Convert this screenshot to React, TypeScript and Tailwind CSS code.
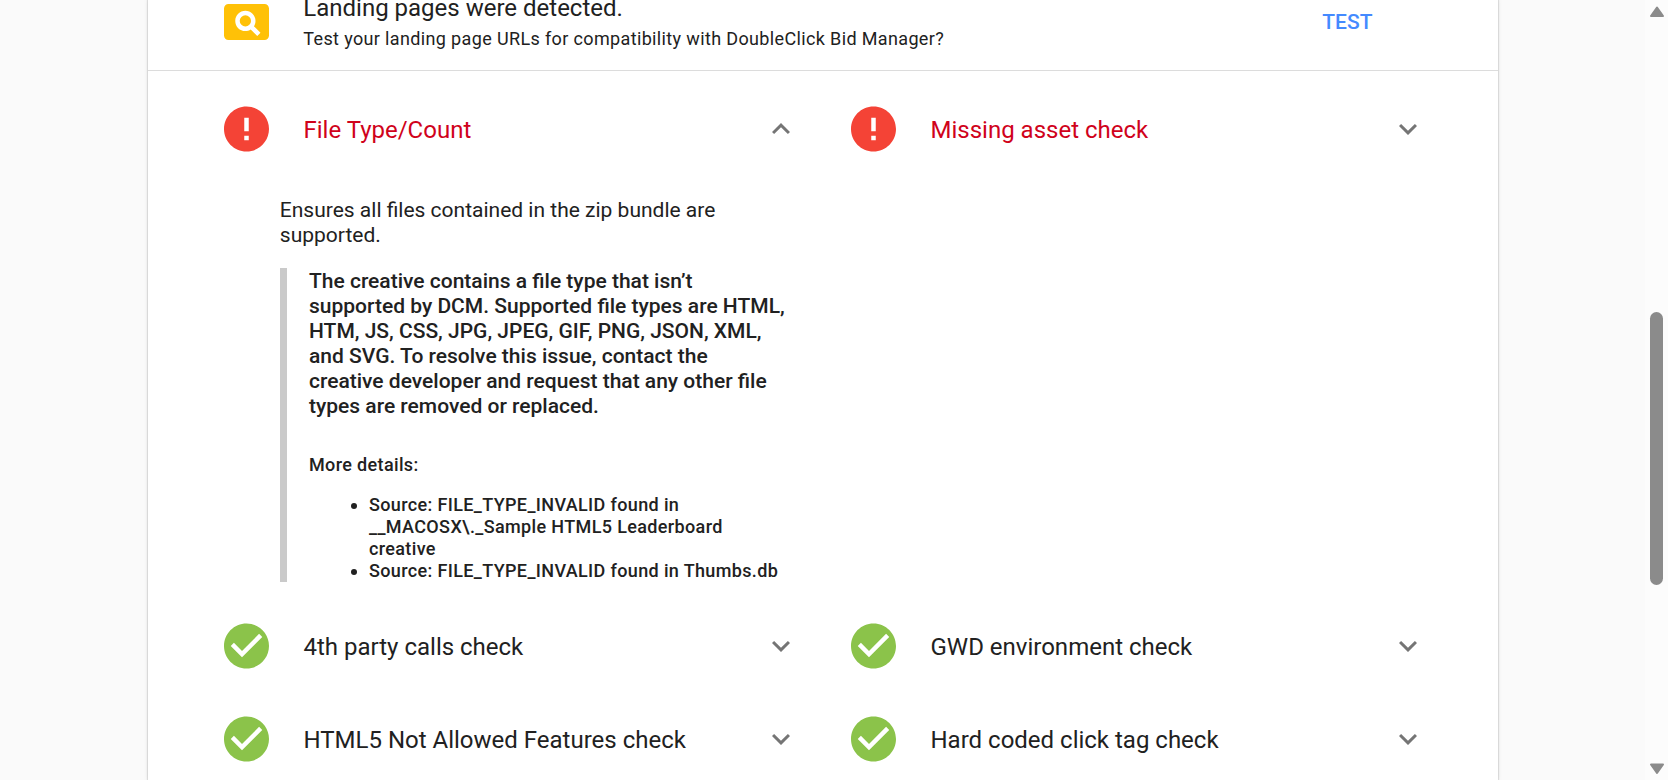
import { MdCheckCircle, MdError, MdExpandLess, MdExpandMore, MdPageview } from "react-icons/md";

type Check = { title: string; passed: boolean; expanded?: boolean };

function CheckHeader({ title, passed, expanded }: Check) {
  return (
    <div className="flex h-[93px] w-[627px] shrink-0 items-center">
      {passed ? (
        <MdCheckCircle className="h-[54px] w-[55px] shrink-0 text-[#8bc34a]" />
      ) : (
        <MdError className="h-[54px] w-[55px] shrink-0 text-[#f44336]" />
      )}
      <h2
        className={
          passed
            ? "ml-[29.5px] w-[459.5px] pt-0.5 text-2xl whitespace-nowrap text-[#212121]"
            : "ml-[29.5px] w-[459.5px] pt-0.5 text-2xl whitespace-nowrap text-[#d0021b]"
        }
      >
        {title}
      </h2>
      <button className="size-9 text-[#757575]" aria-label={title}>
        {expanded ? <MdExpandLess className="size-9" /> : <MdExpandMore className="size-9" />}
      </button>
    </div>
  );
}

function CheckRow({ items }: { items: Check[] }) {
  return (
    <div className="flex pl-[71px]">
      {items.map((item) => (
        <CheckHeader key={item.title} {...item} />
      ))}
    </div>
  );
}

function FailureDetails() {
  return (
    <div className="ml-[131.8px] h-[424px] w-[514px] pt-[23px] text-[21px] leading-[25px]">
      <p className="w-[480px]">Ensures all files contained in the zip bundle are supported.</p>
      <div className="mt-5 h-[314px] border-l-[7px] border-[#cacaca] pt-px pl-[22.2px] font-medium">
        <p className="w-[477px]">
          The creative contains a file type that isn’t supported by DCM. Supported file types are
          HTML, HTM, JS, CSS, JPG, JPEG, GIF, PNG, JSON, XML, and SVG. To resolve this issue,
          contact the creative developer and request that any other file types are removed or
          replaced.
        </p>
        <div className="pt-[35px] text-lg leading-[22px] tracking-[0.02em]">
          <p>More details:</p>
          <ul className="mt-[18px] w-[477px] list-disc pl-[60px]">
            <li>
              Source: FILE_TYPE_INVALID found in __MACOSX\._Sample HTML5 Leaderboard creative
            </li>
            <li className="whitespace-nowrap">Source: FILE_TYPE_INVALID found in Thumbs.db</li>
          </ul>
        </div>
      </div>
    </div>
  );
}

function Scrollbar() {
  return (
    <div className="flex w-[23px] flex-col items-center bg-[#fcfcfc]">
      <svg className="mt-1.5 h-3 w-4" viewBox="0 0 16 12">
        <path d="M8 1.5 14 10H2Z" fill="#8b8b8b" stroke="#8b8b8b" strokeWidth="2" strokeLinejoin="round" />
      </svg>
      <div className="mt-[294px] h-[273px] w-[13px] rounded-full bg-[#8b8b8b]" />
      <svg className="mt-auto mb-[5px] h-3 w-4" viewBox="0 0 16 12">
        <path d="M8 10 2 1.5H14Z" fill="#8b8b8b" stroke="#8b8b8b" strokeWidth="2" strokeLinejoin="round" />
      </svg>
    </div>
  );
}

export default function App() {
  return (
    <div className="flex h-[780px] overflow-hidden bg-[#fafafa] font-[Roboto,sans-serif] text-[#212121]">
      <main className="ml-[148px] w-[1350px] shrink-0 bg-white shadow-[0_0_1px_1px_rgba(0,0,0,0.1),0_0_5px_rgba(0,0,0,0.08)]">
        <section className="flex h-[71px] border-b border-[#dcdcdc] pl-[71px]">
          <MdPageview className="-mt-[5px] h-[54px] w-[55px] shrink-0 text-[#ffc107]" />
          <div className="-mt-2 ml-[29.3px] w-[1019px]">
            <h1 className="text-2xl">Landing pages were detected.</h1>
            <p className="mt-1 text-lg leading-[22px] tracking-[0.02em]">
              Test your landing page URLs for compatibility with DoubleClick Bid Manager?
            </p>
          </div>
          <button className="h-[46px] text-[21px] font-medium text-[#448aff]">TEST</button>
        </section>
        <div className="pt-[11px]">
          <CheckRow
            items={[
              { title: "File Type/Count", passed: false, expanded: true },
              { title: "Missing asset check", passed: false },
            ]}
          />
          <FailureDetails />
          <CheckRow
            items={[
              { title: "4th party calls check", passed: true },
              { title: "GWD environment check", passed: true },
            ]}
          />
          <CheckRow
            items={[
              { title: "HTML5 Not Allowed Features check", passed: true },
              { title: "Hard coded click tag check", passed: true },
            ]}
          />
        </div>
      </main>
      <div className="grow" />
      <Scrollbar />
    </div>
  );
}
